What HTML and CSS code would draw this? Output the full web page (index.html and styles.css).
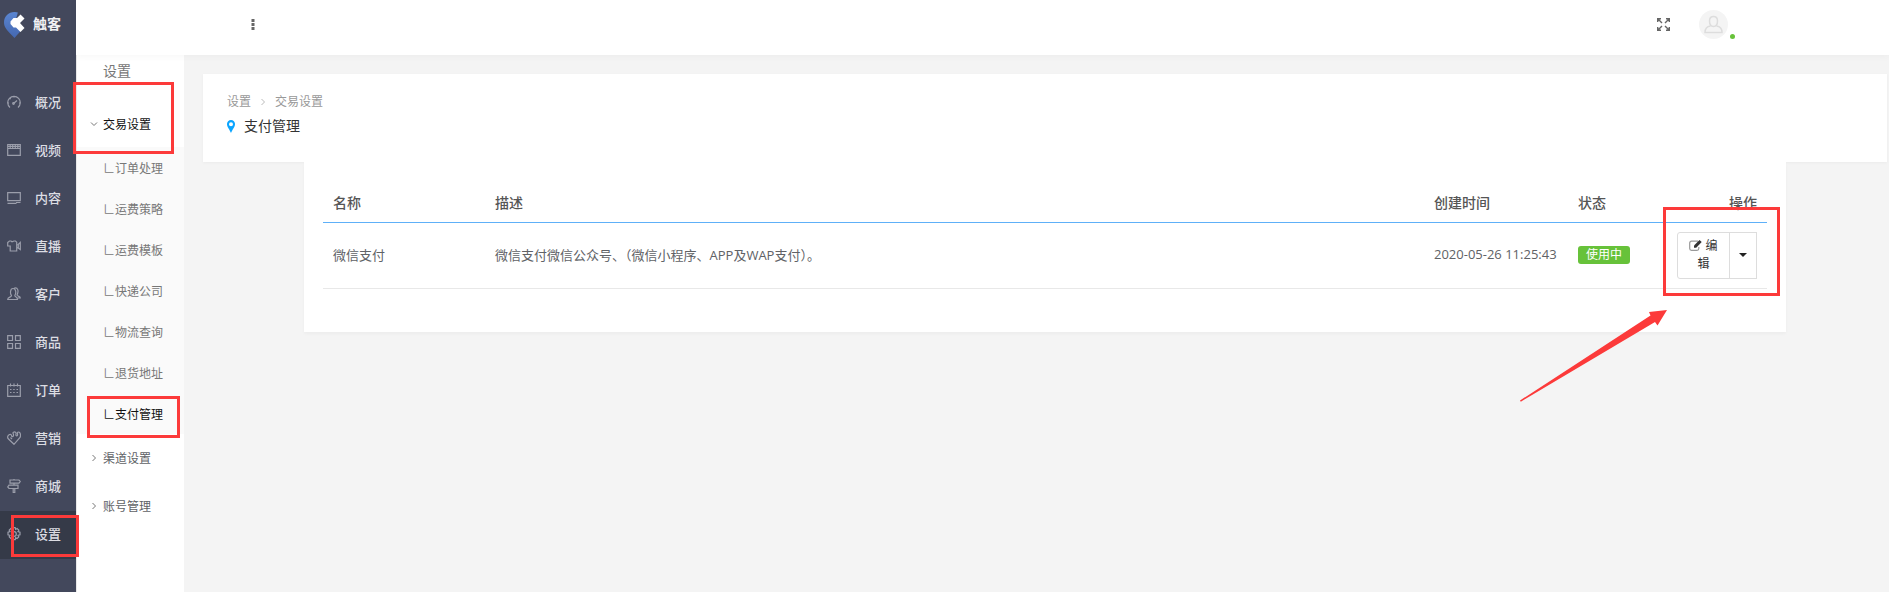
FILE: index.html
```html
<!DOCTYPE html>
<html lang="zh-CN">
<head>
<meta charset="utf-8">
<title>支付管理</title>
<link rel="stylesheet" href="styles.css">
</head>
<body>
<div class="app">
  <aside class="side">
    <a class="brand" href="#">
      <svg class="brand-logo" viewBox="0 0 21 26">
        <defs><linearGradient id="pin" x1="0" y1="0" x2="0" y2="1"><stop offset="0" stop-color="#5b86d2"/><stop offset="1" stop-color="#4467b0"/></linearGradient></defs>
        <path fill="url(#pin)" d="M10.500 0C4.500 0 0 4.500 0 10.500c0 5 3 7.500 10.500 15.500 7-8 9.500-9.500 10-15.500C20.500 4.500 16.500 0 10.500 0z"/>
        <path fill="#43485c" d="M14 0h7v21l-4-1-5-6V7z"/>
        <path fill="#fff" d="M16.500 2.500l4 4-4.500 4.500 4.500 5-4 4-4.500-4.500H9.500L6.500 12V9.500l3-3.500H13z"/>
      </svg>
      <span>触客</span>
    </a>
    <nav class="menu">
      <a class="menu-item" href="#"><svg class="icon" viewBox="0 0 14 14"><path d="M3 12.500A6.300 6.300 0 1 1 11 12.500M6.500 8.500L10 5.500M1 8h1M3 3.500l.7.700M7 1.500v1M12 8h1"/><circle cx="6.500" cy="8.500" r=".8"/></svg><span>概况</span></a>
      <a class="menu-item" href="#"><svg class="icon" viewBox="0 0 14 14"><path d="M.7 1.700h12.600v10.600H.7zM.7 5.500h12.600M3.200 1.700v3.800M5.700 1.700v3.800M8.300 1.700v3.800M10.800 1.700v3.800M.7 3.500h12.600"/></svg><span>视频</span></a>
      <a class="menu-item" href="#"><svg class="icon" viewBox="0 0 14 14"><path d="M.7 1.700h12.600v8H.7zM.5 12.300h9M9 11.500h4.500"/></svg><span>内容</span></a>
      <a class="menu-item" href="#"><svg class="icon" viewBox="0 0 14 14"><path d="M.7 3.500L2.500 2h1.500l1 .8L7 2h1.500l1.200 1.200V12H3.200V7H.7zM9.700 6l1.500-.5L13.300 3.500v7L11.200 9l-1.500-.5M11.300 5.500V9"/></svg><span>直播</span></a>
      <a class="menu-item" href="#"><svg class="icon" viewBox="0 0 14 14"><path d="M4.500 8.500C3 7 3 1.500 6 1.500s3.500 4.500 1.800 7c0 1.500 2.700 1.200 2.700 4H.7c0-2.800 3.800-2 3.800-4zM7 1.200C11 0 12 4 10 8c0 1.200 3.300 1 3.300 3h-3"/></svg><span>客户</span></a>
      <a class="menu-item" href="#"><svg class="icon" viewBox="0 0 14 14"><path d="M.7.700h4.800v4.800H.7zM8.500.700h4.800v4.800H8.500zM.7 8.500h4.800v4.800H.7zM8.500 8.500h4.800v4.800H8.500z"/></svg><span>商品</span></a>
      <a class="menu-item" href="#"><svg class="icon" viewBox="0 0 14 14"><path d="M.7 2.500h12.600v10.800H.7zM3.500.500v3M7 .500v3M10.500.500v3M3 6.500h1.500M6.200 6.500h1.500M9.500 6.500H11M3 9.500h1.500M6.200 9.500h1.500M9.500 9.500H11"/></svg><span>订单</span></a>
      <a class="menu-item" href="#"><svg class="icon" viewBox="0 0 14 14"><path d="M7 13.300L1.500 8C0 6.500.5 4.500 2.500 3.500c1-.5 2 0 2 1.200S6 6 6.500 4.500 5 2 6.500 1.200s3 .3 2.500 2 1 2 1.500 1S9.500 1 11.500 1s2.500 3.500 1.500 5.500zM3.500 6.500L5 8"/></svg><span>营销</span></a>
      <a class="menu-item" href="#"><svg class="icon" viewBox="0 0 14 14"><path d="M3 1h9l1.300 1.500L12 4.200H3zM11 6.200H2L.7 8 2 9.500h9zM7 4.200v2M6.200 9.500v4h1.600v-4M7 0v1"/></svg><span>商城</span></a>
      <a class="menu-item active" href="#"><svg class="icon" viewBox="0 0 14 14"><path d="M5.800.700h2.400l.4 1.700 1.500-.9 1.700 1.700-.8 1.500 2 .5v2.600l-2 .5.8 1.500-1.700 1.700-1.500-.8-.4 2H5.800l-.4-2-1.500.8-1.700-1.700.8-1.500-2-.5V5.200l2-.5-.8-1.500 1.700-1.700 1.500.9z"/><circle cx="7" cy="7" r="2.300"/></svg><span>设置</span><i class="mark mark-settings"></i></a>
    </nav>
  </aside>

  <div class="page">
    <header class="topbar">
      <button class="icon-btn" aria-label="更多"><svg class="dots" viewBox="0 0 4 11"><path d="M.5 0h3v3h-3zM.5 4h3v3h-3zM.5 8h3v3h-3z"/></svg></button>
      <div class="topbar-right">
        <button class="icon-btn" aria-label="全屏"><svg class="expand" viewBox="0 0 13 13"><path d="M.7 4V.7H4M9 .700h3.300V4M12.300 9v3.300H9M4 12.300H.7V9M1 1l4 4M12 1L8 5M12 12L8 8M1 12l4-4"/></svg></button>
        <button class="icon-btn avatar" aria-label="账户"><svg viewBox="0 0 29 29"><path d="M14.500 6.500c-3 0-4 2-4 4.500 0 3 1.500 5.500 4 5.500s4-2.500 4-5.500c0-2.500-1-4.500-4-4.500zM11.500 16c-3.500.5-5.500 2-5.500 6.500h17c0-4.500-2-6-5.500-6.500"/></svg><i class="online"></i></button>
      </div>
    </header>

    <div class="body">
      <nav class="subnav">
        <h2 class="subnav-title">设置</h2>
        <a class="group open" href="#"><svg class="chev" viewBox="0 0 8 8"><path d="M1 2.500l3 3 3-3"/></svg>交易设置<i class="mark mark-trade"></i></a>
        <div class="leaves">
          <a class="leaf" href="#">∟订单处理</a>
          <a class="leaf" href="#">∟运费策略</a>
          <a class="leaf" href="#">∟运费模板</a>
          <a class="leaf" href="#">∟快递公司</a>
          <a class="leaf" href="#">∟物流查询</a>
          <a class="leaf" href="#">∟退货地址</a>
          <a class="leaf current" href="#">∟支付管理<i class="mark mark-pay"></i></a>
        </div>
        <a class="group" href="#"><svg class="chev" viewBox="0 0 8 8"><path d="M2.500 1l3 3-3 3"/></svg>渠道设置</a>
        <a class="group" href="#"><svg class="chev" viewBox="0 0 8 8"><path d="M2.500 1l3 3-3 3"/></svg>账号管理</a>
      </nav>

      <main class="main">
        <section class="head-card">
          <nav class="crumbs"><a href="#">设置</a><svg class="chev" viewBox="0 0 8 8"><path d="M2.500 1l3 3-3 3"/></svg><a href="#">交易设置</a></nav>
          <h1 class="title"><svg class="pin" viewBox="0 0 8 13"><path fill-rule="evenodd" d="M4 0a4 4 0 0 0-4 4.200C0 7 2.500 9 4 13c1.500-4 4-6 4-8.800A4 4 0 0 0 4 0zm0 2.200a2 2 0 1 1 0 4 2 2 0 0 1 0-4z"/></svg>支付管理</h1>
        </section>
        <section class="list-card">
          <table class="list">
            <colgroup><col class="c-name"><col><col class="c-time"><col class="c-state"><col class="c-ops"></colgroup>
            <thead><tr><th>名称</th><th>描述</th><th>创建时间</th><th>状态</th><th class="right">操作</th></tr></thead>
            <tbody><tr>
              <td>微信支付</td>
              <td>微信支付微信公众号、（微信小程序、APP及WAP支付）。</td>
              <td>2020-05-26 11:25:43</td>
              <td><span class="tag">使用中</span></td>
              <td class="ops">
                <div class="btn-group">
                  <button class="btn edit"><svg class="pen" viewBox="0 0 13 11"><path class="box" d="M9 1.200H2.500A1.800 1.800 0 0 0 .7 3v5.500a1.800 1.800 0 0 0 1.800 1.800H8a1.800 1.800 0 0 0 1.800-1.800V7"/><path class="nib" d="M10.500 0l2.200 2-5.500 5.800H5V5.500z"/></svg> 编辑</button>
                  <button class="btn more" aria-label="更多操作"><svg class="caret" viewBox="0 0 8 4"><path d="M0 0h8L4 4z"/></svg></button>
                </div>
                <i class="mark mark-ops"></i>
                <svg class="arrow" viewBox="0 0 147 92"><path d="M147 0L129 2l1.500 3.500L0 90.500l.8 1.200L135 12l2.500 3.500z"/></svg>
              </td>
            </tr></tbody>
          </table>
        </section>
      </main>
    </div>
  </div>
</div>
</body>
</html>
```
FILE: styles.css
```css
* { box-sizing: border-box; }
body {
  margin: 0;
  font-family: "Open Sans", "Noto Sans CJK SC", sans-serif;
  font-size: 13px;
  color: #606266;
  background: #f4f4f4;
}
a { color: inherit; text-decoration: none; }
button { font: inherit; color: inherit; margin: 0; }
svg { display: block; flex: none; }
h1, h2 { margin: 0; font-weight: 400; }

.app { display: flex; min-height: 100vh; }

/* primary navigation */
.side { flex: none; width: 76px; background: #43485c; color: #dcdde3; }
.brand {
  display: flex;
  align-items: center;
  gap: 8px;
  height: 49px;
  padding-left: 4px;
  font-size: 14px;
  font-weight: 700;
  color: #f0f0f3;
}
.brand-logo { width: 21px; height: 26px; }
.brand span { padding-bottom: 3px; }
.menu { padding-top: 30px; }
.menu-item {
  position: relative;
  display: flex;
  align-items: center;
  gap: 14px;
  height: 48px;
  padding: 0 0 2px 7px;
  font-weight: 500;
}
.menu-item span { padding-bottom: 2px; }
.menu-item.active { background: #353a48; }
.icon { width: 14px; height: 14px; fill: none; stroke: #9b9eab; stroke-width: 1.2; }

/* top bar */
.page { flex: 1; min-width: 0; display: flex; flex-direction: column; }
.topbar {
  position: relative;
  display: flex;
  align-items: center;
  justify-content: space-between;
  height: 55px;
  padding: 0 161px 6px 175px;
  background: #fff;
  box-shadow: 0 1px 8px rgba(0, 0, 0, .04);
}
.icon-btn { padding: 0; border: 0; background: none; }
.dots { width: 4px; height: 11px; fill: #666; }
.topbar-right { display: flex; align-items: center; gap: 29px; }
.expand { width: 13px; height: 13px; fill: none; stroke: #666; stroke-width: 1.4; }
.avatar { position: relative; width: 29px; height: 29px; border-radius: 50%; background: #f4f4f4; }
.avatar svg { fill: none; stroke: #ddd; stroke-width: 1.5; }
.online {
  position: absolute;
  right: -7px;
  bottom: 0;
  width: 5px;
  height: 5px;
  border-radius: 50%;
  background: #67c23a;
}

.body { flex: 1; display: flex; }

/* secondary navigation */
.subnav { flex: none; width: 108px; background: #fff; border-left: 1px solid #e8e8e8; font-size: 12px; }
.subnav-title { height: 44px; padding: 4px 0 0 26px; font-size: 14px; line-height: 24px; color: #777; }
.group { position: relative; display: flex; align-items: center; gap: 5px; height: 48px; padding-left: 13px; }
.group.open { padding-top: 2px; color: #111; }
.chev { width: 8px; height: 8px; fill: none; stroke: #777; }
.leaves { background: #fafafa; }
.leaf { position: relative; display: flex; align-items: center; height: 41px; padding-left: 26px; color: #777; }
.leaf.current { color: #111; }

/* content */
.main { flex: 1; min-width: 0; padding: 19px 2px 0 19px; }
.head-card { height: 88px; padding: 18px 24px; background: #fff; box-shadow: 0 1px 3px rgba(0, 0, 0, .04); }
.crumbs { display: flex; align-items: center; gap: 8px; font-size: 12px; line-height: 20px; color: #999; }
.crumbs .chev { stroke: #bbb; }
.title { display: flex; align-items: center; gap: 9px; margin-top: 3px; font-size: 14px; line-height: 22px; color: #333; }
.pin { width: 8px; height: 13px; fill: #0aa5ff; }
.list-card { position: relative; margin: 0 6%; padding: 18px 19px 43px; background: #fff; box-shadow: 0 2px 3px rgba(0, 0, 0, .03); }

.list { width: 100%; table-layout: fixed; border-collapse: collapse; }
.c-name { width: 162px; }
.c-time { width: 144px; }
.c-state { width: 99px; }
.c-ops { width: 100px; }
.list th { height: 42px; padding: 2px 10px 0; border-bottom: 1px solid #5eb0f8; font-size: 14px; font-weight: 500; text-align: left; color: #555; }
.list th.right { text-align: right; }
.list td { height: 66px; padding: 8px 10px 10px; border-bottom: 1px solid #e8e8e8; white-space: nowrap; }
.tag { display: inline-block; padding: 0 8px; border-radius: 3px; background: #67c23a; color: #fff; font-size: 12px; line-height: 18px; }
.list .ops { position: relative; padding: 9px 10px; }
.btn-group { display: flex; height: 47px; }
.btn { border: 1px solid #ddd; background: #fff; color: #333; font-size: 12px; line-height: 18px; }
.edit { flex: 1; padding: 0 11px; border-radius: 3px 0 0 3px; white-space: normal; }
.more { width: 28px; margin-left: -1px; padding: 0 9px; }
.pen { display: inline-block; width: 13px; height: 11px; vertical-align: -1px; }
.pen .box { fill: none; stroke: #999; stroke-width: 1.2; }
.pen .nib { fill: #333; }
.caret { width: 8px; height: 4px; fill: #222; }

/* highlight frames laid over the interface */
.mark { position: absolute; z-index: 2; border: 3px solid #fc3a3a; pointer-events: none; }
.mark-settings { left: 11px; top: 4px; width: 68px; height: 42px; }
.mark-trade { left: -4px; top: -17px; width: 101px; height: 72px; }
.mark-pay { left: 10px; top: 3px; width: 93px; height: 42px; }
.mark-ops { left: -4px; top: -16px; width: 117px; height: 89px; }
.arrow { position: absolute; z-index: 2; left: -147px; top: 87px; width: 147px; height: 92px; fill: #fc3a3a; pointer-events: none; }
```
